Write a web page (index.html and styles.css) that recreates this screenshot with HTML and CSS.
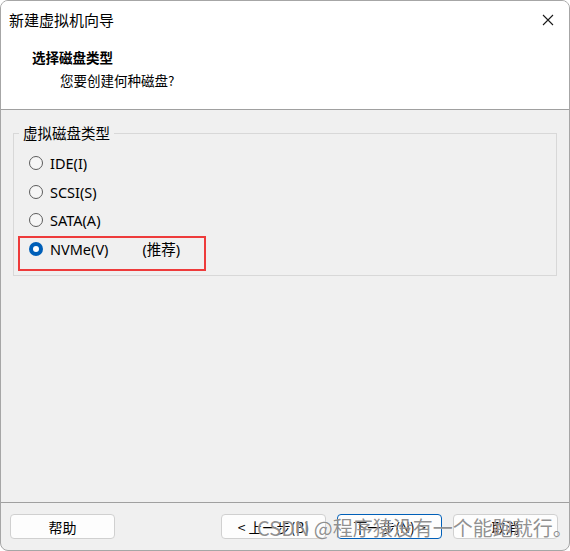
FILE: index.html
```html
<!DOCTYPE html>
<html lang="zh-CN">
<head>
    <meta charset="UTF-8">
    <title>新建虚拟机向导</title>
    <link rel="stylesheet" href="styles.css">
</head>
<body>
    <div class="window">
        <div class="titlebar">
            <span class="title">新建虚拟机向导</span>
            <svg class="close" width="12" height="12" viewBox="0 0 12 12">
                <path d="M1 1 L11 11 M11 1 L1 11" stroke="#1a1a1a" stroke-width="1.1" fill="none"/>
            </svg>
        </div>

        <div class="header">
            <div class="heading">选择磁盘类型</div>
            <div class="subheading">您要创建何种磁盘?</div>
        </div>

        <div class="content">
            <fieldset class="group">
                <legend>虚拟磁盘类型</legend>
                <div class="row"><span class="radio"></span>IDE(I)</div>
                <div class="row"><span class="radio"></span>SCSI(S)</div>
                <div class="row"><span class="radio"></span>SATA(A)</div>
                <div class="row recommended">
                    <span class="radio checked"></span>NVMe(V)<span class="hint">(推荐)</span>
                    <span class="mark"></span>
                </div>
            </fieldset>
        </div>

        <div class="footer">
            <button class="btn">帮助</button>
            <div class="spacer"></div>
            <button class="btn">&lt; 上一步(B)</button>
            <button class="btn default">下一步(N) &gt;</button>
            <button class="btn">取消</button>
        </div>

        <div class="watermark">CSDN @程序猿没有一个能跑就行。</div>
    </div>
</body>
</html>
```

FILE: styles.css
```css
body {
    margin: 0;
    background: #ffffff;
    font-family: "Noto Sans", "Noto Sans CJK SC", sans-serif;
    color: #000;
}

.window {
    position: relative;
    width: 570px;
    height: 551px;
    box-sizing: border-box;
    border: 1px solid #a6a6a6;
    border-radius: 8px;
    overflow: hidden;
    background: #f0f0f0;
    display: flex;
    flex-direction: column;
}

.titlebar {
    height: 37px;
    background: #fff;
    display: flex;
    align-items: center;
    justify-content: space-between;
    padding: 0 15px 0 8px;
}

.title {
    font-family: "Noto Sans CJK SC", sans-serif;
    font-size: 15px;
}

.close {
    display: block;
}

.header {
    height: 72px;
    background: #fff;
    border-bottom: 1px solid #a0a0a0;
    padding: 9px 0 0 31px;
    box-sizing: border-box;
}

.heading {
    font-family: "Noto Sans CJK SC", sans-serif;
    font-size: 13.5px;
    font-weight: bold;
    line-height: 20px;
}

.subheading {
    font-family: "Noto Sans CJK SC", sans-serif;
    font-size: 13.5px;
    line-height: 20px;
    margin: 3px 0 0 28px;
}

.content {
    flex: 1;
    padding: 13px 12px 0 12px;
}

.group {
    margin: 0;
    border: 1px solid #d8d8d8;
    padding: 6px 15px 12px 15px;
}

.group legend {
    font-family: "Noto Sans CJK SC", sans-serif;
    font-size: 14.5px;
    line-height: 20px;
    padding: 0 4px;
    margin-left: -10px;
}

.row {
    height: 28.5px;
    display: flex;
    align-items: center;
    font-size: 14.5px;
}

.radio {
    width: 12px;
    height: 12px;
    border: 1px solid #5c5c5c;
    border-radius: 50%;
    background: #f6f6f6;
    margin-right: 7px;
    box-sizing: content-box;
}

.radio.checked {
    width: 14px;
    height: 14px;
    border: none;
    background: #005fb8;
    position: relative;
}

.radio.checked::after {
    content: "";
    position: absolute;
    left: 4px;
    top: 4px;
    width: 6px;
    height: 6px;
    border-radius: 50%;
    background: #fff;
}

.hint {
    margin-left: 34px;
    font-family: "Noto Sans", "Noto Sans CJK SC", sans-serif;
}

.recommended {
    position: relative;
}

/* red annotation box drawn over the screenshot */
.mark {
    position: absolute;
    left: -11px;
    top: 1px;
    width: 184px;
    height: 31px;
    border: 2px solid #ee3b3b;
}

.footer {
    height: 48px;
    box-sizing: border-box;
    border-top: 1px solid #a0a0a0;
    display: flex;
    align-items: flex-start;
    gap: 11px;
    padding: 11px 11px 0 9px;
}

.spacer {
    flex: 1;
}

.btn {
    width: 105px;
    height: 25px;
    border: 1px solid #d0d0d0;
    border-radius: 4px;
    background: #fdfdfd;
    font-family: "Noto Sans CJK SC", sans-serif;
    font-size: 14px;
    padding: 0;
    color: #000;
}

.btn.default {
    border-color: #005fb8;
}

.watermark {
    position: absolute;
    left: 256px;
    top: 512px;
    font-family: "Noto Sans CJK SC", sans-serif;
    font-size: 20px;
    line-height: 29px;
    color: rgba(95, 95, 95, 0.7);
    text-shadow: 0 0 1px #fff;
    white-space: nowrap;
}
```
